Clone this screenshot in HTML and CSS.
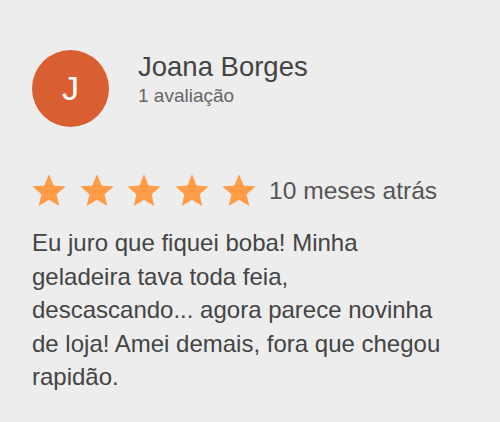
FILE: index.html
```html
<!DOCTYPE html>
<html>
<head>
<meta name="viewport" content="width=device-width, initial-scale=1.0">
<link rel="stylesheet" href="styles.css">
</head>
<body>
<div class="review">
	<div class="author">
		<div class="avatar">J</div>
		<div class="who">
			<div class="name">Joana Borges</div>
			<div class="count">1 avaliação</div>
		</div>
	</div>
	<div class="rating">
		<div class="stars">
			<svg viewBox="0 0 24 24"><path d="M12 17.27L18.18 21l-1.64-7.03L22 9.24l-7.19-.61L12 2 9.19 8.63 2 9.24l5.46 4.73L5.82 21z"/></svg>
			<svg viewBox="0 0 24 24"><path d="M12 17.27L18.18 21l-1.64-7.03L22 9.24l-7.19-.61L12 2 9.19 8.63 2 9.24l5.46 4.73L5.82 21z"/></svg>
			<svg viewBox="0 0 24 24"><path d="M12 17.27L18.18 21l-1.64-7.03L22 9.24l-7.19-.61L12 2 9.19 8.63 2 9.24l5.46 4.73L5.82 21z"/></svg>
			<svg viewBox="0 0 24 24"><path d="M12 17.27L18.18 21l-1.64-7.03L22 9.24l-7.19-.61L12 2 9.19 8.63 2 9.24l5.46 4.73L5.82 21z"/></svg>
			<svg viewBox="0 0 24 24"><path d="M12 17.27L18.18 21l-1.64-7.03L22 9.24l-7.19-.61L12 2 9.19 8.63 2 9.24l5.46 4.73L5.82 21z"/></svg>
		</div>
		<span class="when">10 meses atrás</span>
	</div>
	<p class="text">Eu juro que fiquei boba! Minha geladeira tava toda feia, descascando... agora parece novinha de loja! Amei demais, fora que chegou rapidão.</p>
</div>
</body>
</html>
```

FILE: styles.css
```css
* {
	font-family: 'Liberation Sans', Arial, sans-serif;
}
body {
	margin: 0;
	background: #ededed;
}
.review {
	padding: 50px 0 0 32px;
	width: 416px;
}
.author {
	display: flex;
	align-items: flex-start;
}
.avatar {
	width: 77px;
	height: 77px;
	border-radius: 50%;
	background: #d95f33;
	color: #fff;
	font-size: 34px;
	display: flex;
	align-items: center;
	justify-content: center;
	flex-shrink: 0;
}
.who {
	margin-left: 29px;
	margin-top: 1px;
}
.name {
	font-size: 27.5px;
	line-height: 32px;
	color: #444;
}
.count {
	font-size: 19px;
	line-height: 22px;
	color: #666;
	margin-top: 2px;
}
.rating {
	display: flex;
	align-items: flex-start;
	margin-top: 44px;
}
.stars {
	display: flex;
	gap: 7.5px;
	margin-left: -3px;
}
.stars svg {
	width: 40px;
	height: 40px;
	fill: #ff9c45;
}
.when {
	font-size: 24.6px;
	line-height: 28px;
	color: #555;
	margin: 6px 0 0 10px;
}
.text {
	margin: 15px 0 0 0;
	font-size: 24px;
	line-height: 33.5px;
	color: #444;
}
```
